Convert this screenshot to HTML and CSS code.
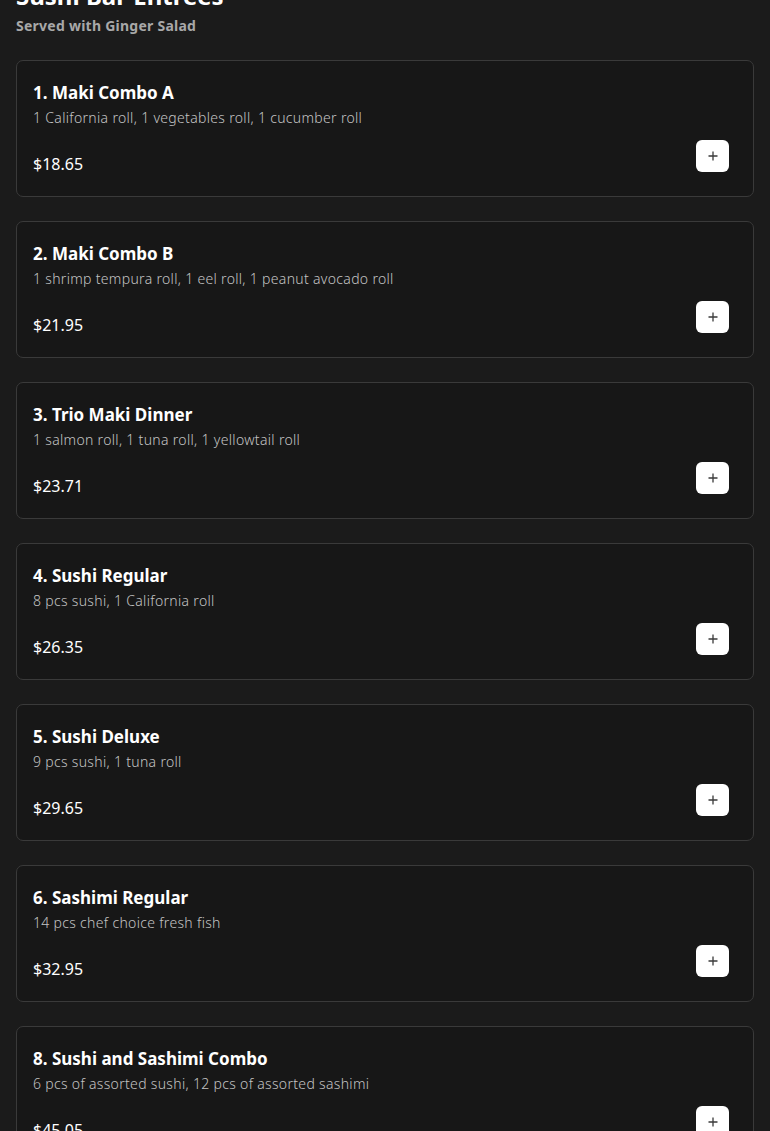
FILE: index.html
```html
<!DOCTYPE html>
<html lang="en">
<head>
<meta charset="utf-8">
<title>Sushi Bar Entrees</title>
<link rel="stylesheet" href="styles.css">
</head>
<body>
<main class="menu">
  <header class="section-head">
    <h1 class="section-title">Sushi Bar Entrees</h1>
    <p class="section-sub">Served with Ginger Salad</p>
  </header>
  <ul class="items">
    <li class="card">
      <h2 class="item-name">1. Maki Combo A</h2>
      <p class="item-desc">1 California roll, 1 vegetables roll, 1 cucumber roll</p>
      <div class="item-foot"><span class="price">$18.65</span><button class="add" aria-label="Add"><svg viewBox="0 0 12 12" width="12" height="12"><path d="M6 1.5v9M1.5 6h9"/></svg></button></div>
    </li>
    <li class="card">
      <h2 class="item-name">2. Maki Combo B</h2>
      <p class="item-desc">1 shrimp tempura roll, 1 eel roll, 1 peanut avocado roll</p>
      <div class="item-foot"><span class="price">$21.95</span><button class="add" aria-label="Add"><svg viewBox="0 0 12 12" width="12" height="12"><path d="M6 1.5v9M1.5 6h9"/></svg></button></div>
    </li>
    <li class="card">
      <h2 class="item-name">3. Trio Maki Dinner</h2>
      <p class="item-desc">1 salmon roll, 1 tuna roll, 1 yellowtail roll</p>
      <div class="item-foot"><span class="price">$23.71</span><button class="add" aria-label="Add"><svg viewBox="0 0 12 12" width="12" height="12"><path d="M6 1.5v9M1.5 6h9"/></svg></button></div>
    </li>
    <li class="card">
      <h2 class="item-name">4. Sushi Regular</h2>
      <p class="item-desc">8 pcs sushi, 1 California roll</p>
      <div class="item-foot"><span class="price">$26.35</span><button class="add" aria-label="Add"><svg viewBox="0 0 12 12" width="12" height="12"><path d="M6 1.5v9M1.5 6h9"/></svg></button></div>
    </li>
    <li class="card">
      <h2 class="item-name">5. Sushi Deluxe</h2>
      <p class="item-desc">9 pcs sushi, 1 tuna roll</p>
      <div class="item-foot"><span class="price">$29.65</span><button class="add" aria-label="Add"><svg viewBox="0 0 12 12" width="12" height="12"><path d="M6 1.5v9M1.5 6h9"/></svg></button></div>
    </li>
    <li class="card">
      <h2 class="item-name">6. Sashimi Regular</h2>
      <p class="item-desc">14 pcs chef choice fresh fish</p>
      <div class="item-foot"><span class="price">$32.95</span><button class="add" aria-label="Add"><svg viewBox="0 0 12 12" width="12" height="12"><path d="M6 1.5v9M1.5 6h9"/></svg></button></div>
    </li>
    <li class="card">
      <h2 class="item-name">8. Sushi and Sashimi Combo</h2>
      <p class="item-desc">6 pcs of assorted sushi, 12 pcs of assorted sashimi</p>
      <div class="item-foot"><span class="price">$45.05</span><button class="add" aria-label="Add"><svg viewBox="0 0 12 12" width="12" height="12"><path d="M6 1.5v9M1.5 6h9"/></svg></button></div>
    </li>
  </ul>
</main>
</body>
</html>
```
FILE: styles.css
```css
html, body {
  margin: 0;
  padding: 0;
  background: #1b1b1b;
}
body {
  font-family: "Noto Sans", "Open Sans", sans-serif;
  color: #fff;
  overflow: hidden;
}
.menu {
  padding: 0 16px;
}
.section-head {
  margin-top: -20px;
  margin-bottom: 24px;
}
.section-title {
  margin: 0;
  font-size: 24px;
  line-height: 32px;
  font-weight: 700;
  color: #fff;
}
.section-sub {
  margin: 4px 0 0;
  font-size: 14px;
  line-height: 20px;
  font-weight: 700;
  letter-spacing: 0.25px;
  color: #a8a8a8;
}
.items {
  list-style: none;
  margin: 0;
  padding: 0;
  display: flex;
  flex-direction: column;
  gap: 24px;
}
.card {
  background: #171717;
  border: 1px solid #3a3a3a;
  border-radius: 7px;
  padding: 20px 24px 20px 16px;
  box-sizing: border-box;
  height: 137px;
}
.item-name {
  margin: 0;
  font-size: 17px;
  line-height: 24px;
  font-weight: 700;
  color: #fff;
}
.item-desc {
  margin: 2px 0 0;
  font-size: 14px;
  line-height: 22px;
  font-weight: 300;
  letter-spacing: 0.32px;
  color: #c4c4c4;
}
.item-foot {
  margin-top: 11px;
  display: flex;
  justify-content: space-between;
  align-items: flex-start;
}
.price {
  padding-top: 12px;
  font-size: 16px;
  line-height: 24px;
  font-weight: 400;
  color: #fff;
}
.add {
  width: 33px;
  height: 32px;
  border: 0;
  border-radius: 6px;
  background: #fff;
  padding: 0;
  display: flex;
  align-items: center;
  justify-content: center;
  cursor: pointer;
}
.add svg path {
  fill: none;
  stroke: #3a3a3a;
  stroke-width: 1.3;
}
```
